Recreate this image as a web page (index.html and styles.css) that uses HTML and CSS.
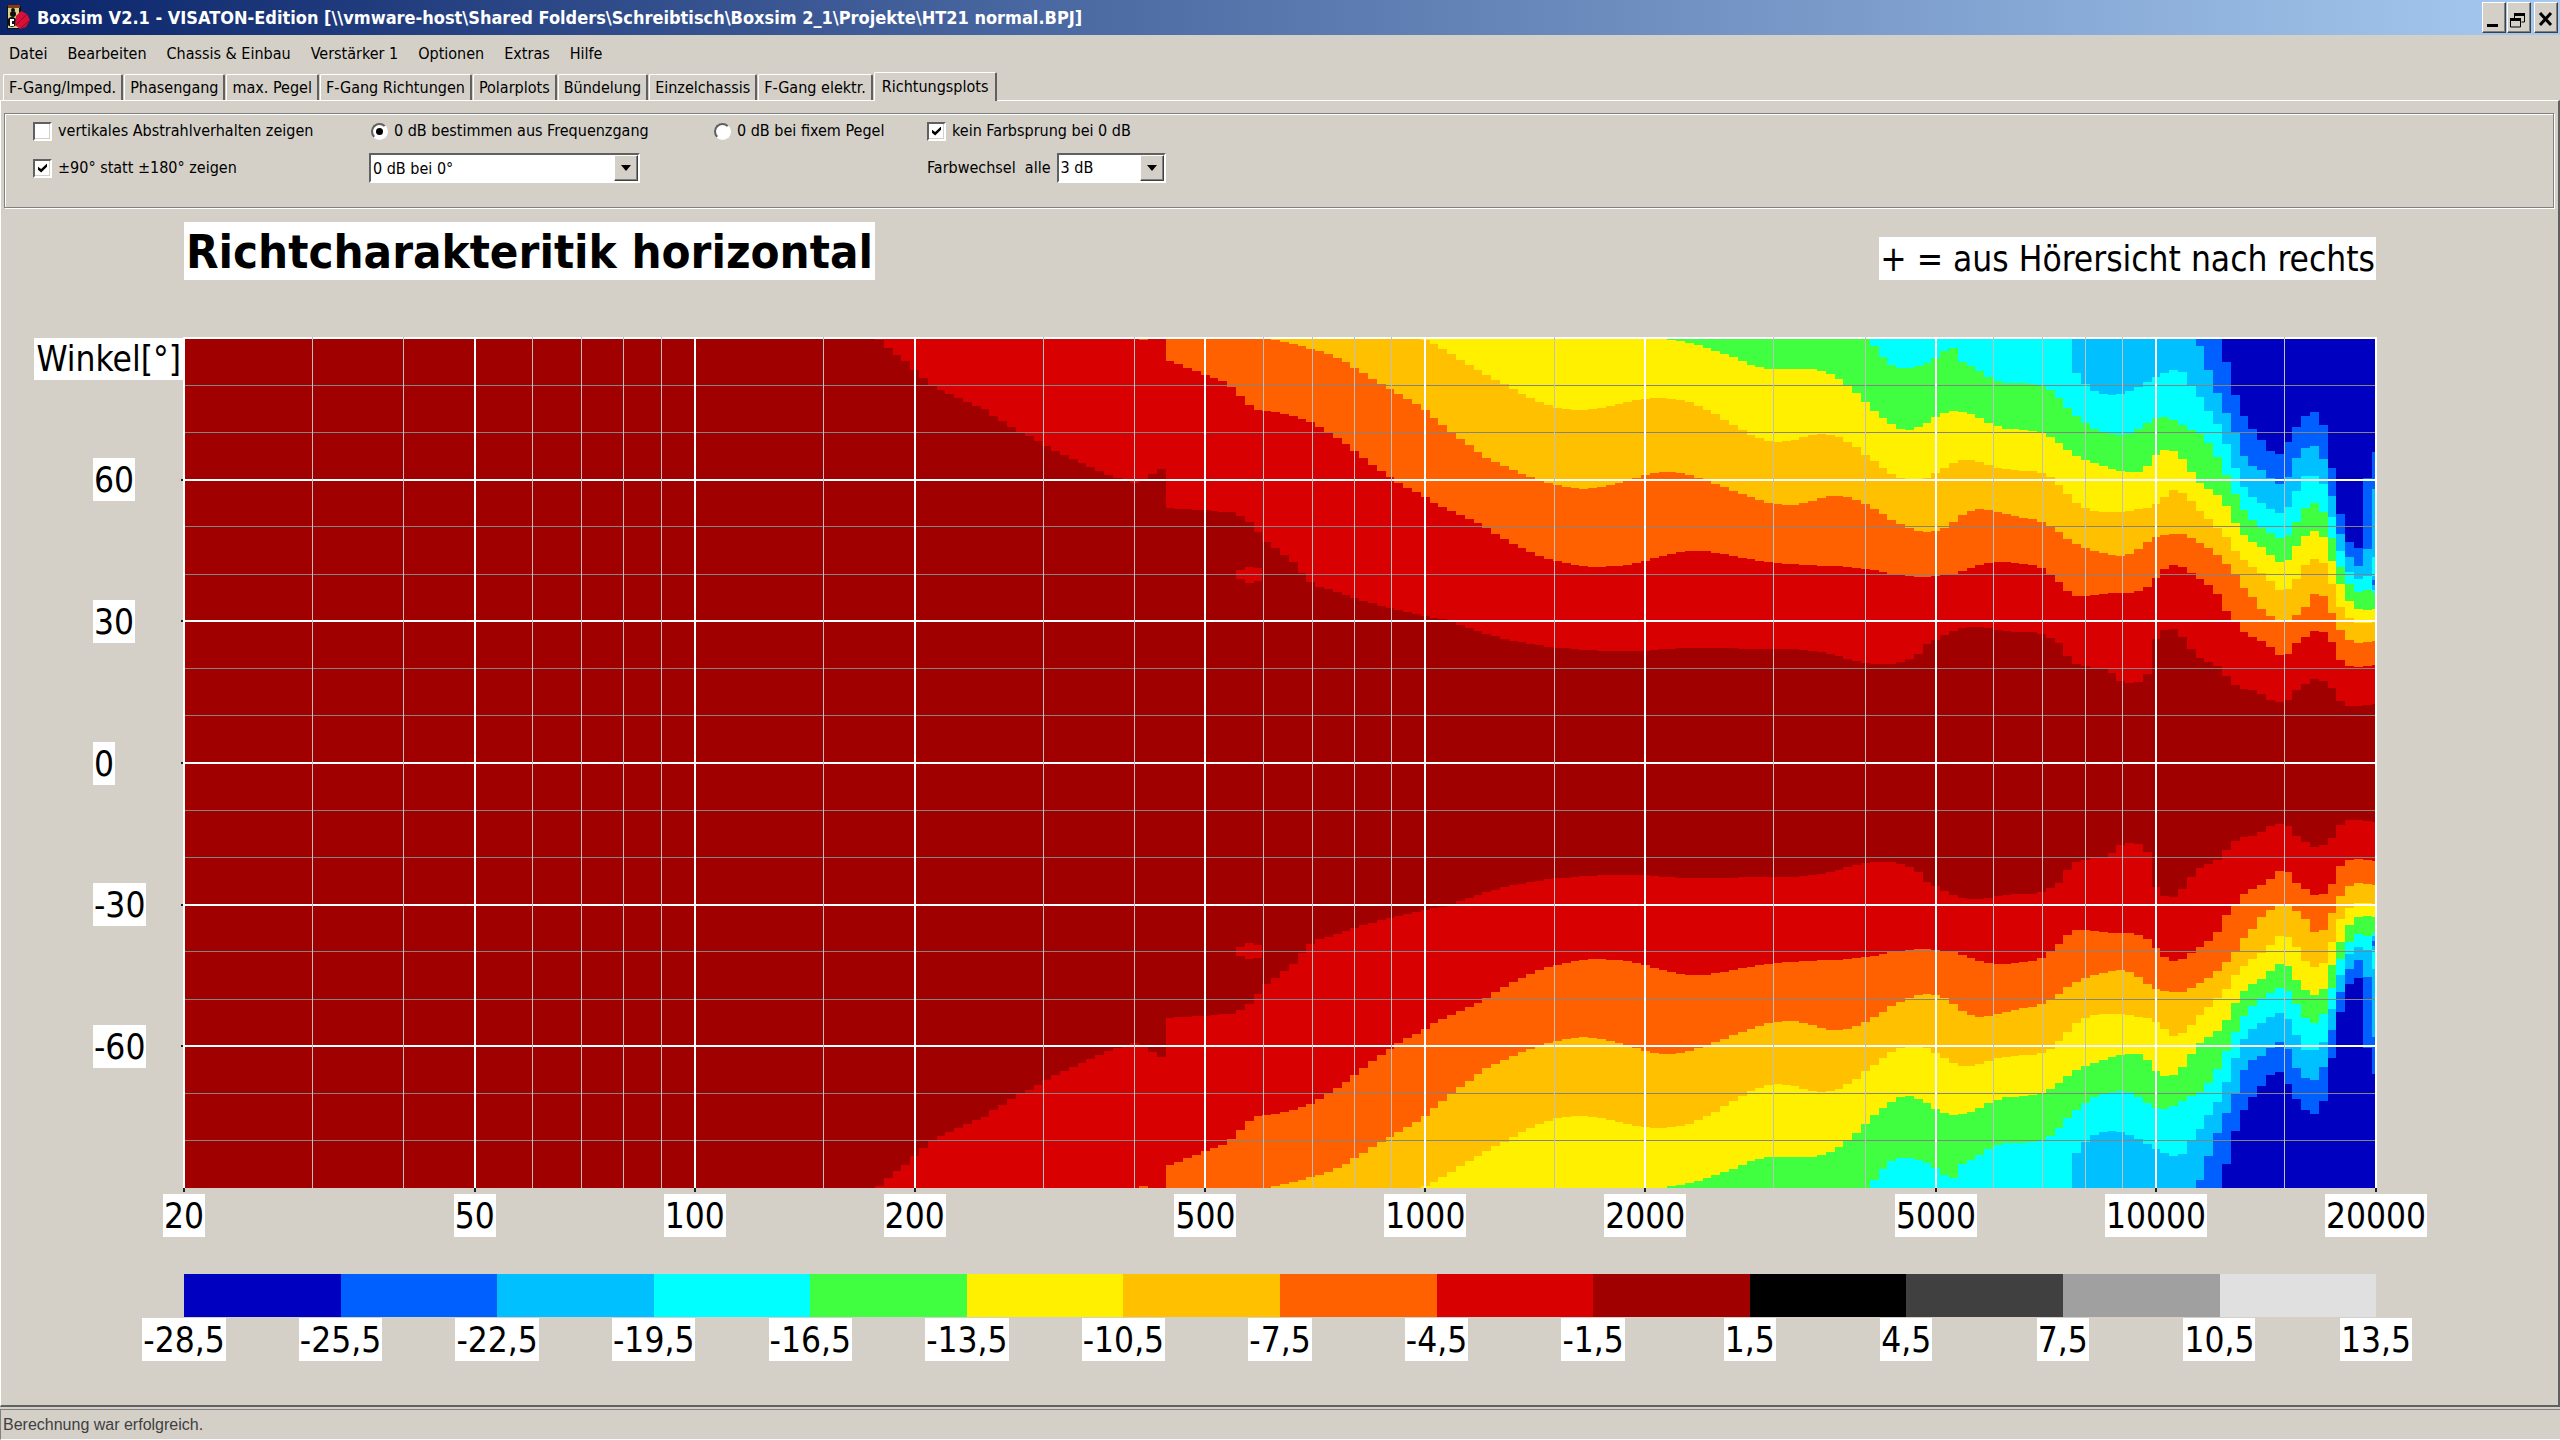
FILE: index.html
```html
<!DOCTYPE html>
<html lang="de">
<head>
<meta charset="utf-8">
<title>Boxsim V2.1 - VISATON-Edition</title>
<link rel="stylesheet" href="styles.css">
</head>
<body>
<div class="app">
  <header class="titlebar">
    <svg class="app-icon" viewBox="0 0 24 26" aria-hidden="true">
      <rect x="1" y="1" width="14" height="23" fill="#101010"/>
      <rect x="2" y="0" width="12" height="3" fill="#8a3a12"/>
      <rect x="2" y="3" width="11" height="20" fill="#d8d08c"/>
      <circle cx="7" cy="5" r="2" fill="#101010"/>
      <circle cx="7" cy="9" r="3" fill="#101010"/>
      <circle cx="6" cy="17" r="5" fill="#101010"/>
      <path d="M8 15H5v5h3" stroke="#fff" stroke-width="2" fill="none"/>
      <path d="M10 11l5-5 6 3 3 6-4 7-6 2-5-4z" fill="#d81038"/>
      <path d="M10 20L21 9M15 23l9-8" stroke="#8c0a28" stroke-width="1" fill="none"/>
    </svg>
    <h1 class="title">Boxsim V2.1 - VISATON-Edition [\\vmware-host\Shared Folders\Schreibtisch\Boxsim 2_1\Projekte\HT21 normal.BPJ]</h1>
    <div class="window-buttons">
      <button class="win-btn" type="button" aria-label="Minimieren"><svg viewBox="0 0 20 26"><path d="M4 19h11v3H4z"/></svg></button>
      <button class="win-btn" type="button" aria-label="Wiederherstellen"><svg viewBox="0 0 20 26"><path d="M6 8h11v3H6zM2 13h11v3H2z"/><path d="M6.500 9v5M16.500 9v8h-3M2.500 14v8h10v-8" fill="none" stroke="#000"/></svg></button>
      <button class="win-btn win-close" type="button" aria-label="Schließen"><svg viewBox="0 0 20 26"><path d="M5 8l11 12M16 8L5 20" stroke="#000" stroke-width="3"/></svg></button>
    </div>
  </header>

  <nav class="menubar">
    <button type="button">Datei</button>
    <button type="button">Bearbeiten</button>
    <button type="button">Chassis &amp; Einbau</button>
    <button type="button">Verstärker 1</button>
    <button type="button">Optionen</button>
    <button type="button">Extras</button>
    <button type="button">Hilfe</button>
  </nav>

  <div class="tabs" role="tablist">
    <button class="tab" role="tab" type="button">F-Gang/Imped.</button>
    <button class="tab" role="tab" type="button">Phasengang</button>
    <button class="tab" role="tab" type="button">max. Pegel</button>
    <button class="tab" role="tab" type="button">F-Gang Richtungen</button>
    <button class="tab" role="tab" type="button">Polarplots</button>
    <button class="tab" role="tab" type="button">Bündelung</button>
    <button class="tab" role="tab" type="button">Einzelchassis</button>
    <button class="tab" role="tab" type="button">F-Gang elektr.</button>
    <button class="tab tab-active" role="tab" type="button" aria-selected="true">Richtungsplots</button>
  </div>

  <main class="page">
    <form class="options">
      <label class="option"><input type="checkbox">vertikales Abstrahlverhalten zeigen</label>
      <label class="option"><input type="radio" name="ref" checked>0 dB bestimmen aus Frequenzgang</label>
      <label class="option"><input type="radio" name="ref">0 dB bei fixem Pegel</label>
      <label class="option"><input type="checkbox" checked>kein Farbsprung bei 0 dB</label>
      <label class="option"><input type="checkbox" checked>±90° statt ±180° zeigen</label>
      <span class="combo combo-wide"><select aria-label="Bezug"><option>0 dB bei 0°</option></select><span class="combo-arrow"></span></span>
      <span></span>
      <span class="option step"><label for="step">Farbwechsel&nbsp; alle</label><span class="combo combo-small"><select id="step"><option>3 dB</option></select><span class="combo-arrow"></span></span></span>
    </form>

    <section class="chart">
      <div class="chart-head">
        <h2 class="chart-title">Richtcharakteritik horizontal</h2>
        <p class="tag">+ = aus Hörersicht nach rechts</p>
      </div>
      <div class="y-axis">
        <div class="y-end y-name"><span class="tag">Winkel[°]</span></div>
        <div class="y-cell"><span class="tag">60</span></div>
        <div class="y-cell"><span class="tag">30</span></div>
        <div class="y-cell"><span class="tag">0</span></div>
        <div class="y-cell"><span class="tag">-30</span></div>
        <div class="y-cell"><span class="tag">-60</span></div>
        <div class="y-end"></div>
      </div>
      <svg class="plot" id="plot" viewBox="0 0 6576 2550" preserveAspectRatio="none" role="img" aria-label="Richtcharakteristik"></svg>
      <div class="x-axis">
        <span class="anchor"><span class="tag">20</span></span>
        <span class="anchor"><span class="tag">50</span></span>
        <span class="anchor"><span class="tag">100</span></span>
        <span class="anchor"><span class="tag">200</span></span>
        <span class="anchor"><span class="tag">500</span></span>
        <span class="anchor"><span class="tag">1000</span></span>
        <span class="anchor"><span class="tag">2000</span></span>
        <span class="anchor"><span class="tag">5000</span></span>
        <span class="anchor"><span class="tag">10000</span></span>
        <span class="anchor"><span class="tag">20000</span></span>
      </div>
      <div class="legend">
        <i class="c-navy"></i><i class="c-blue"></i><i class="c-sky"></i><i class="c-cyan"></i><i class="c-green"></i><i class="c-yellow"></i><i class="c-amber"></i><i class="c-orange"></i><i class="c-red"></i><i class="c-dark"></i><i class="c-black"></i><i class="c-gray3"></i><i class="c-gray2"></i><i class="c-gray1"></i>
      </div>
      <div class="legend-labels">
        <span class="anchor"><span class="tag">-28,5</span></span>
        <span class="anchor"><span class="tag">-25,5</span></span>
        <span class="anchor"><span class="tag">-22,5</span></span>
        <span class="anchor"><span class="tag">-19,5</span></span>
        <span class="anchor"><span class="tag">-16,5</span></span>
        <span class="anchor"><span class="tag">-13,5</span></span>
        <span class="anchor"><span class="tag">-10,5</span></span>
        <span class="anchor"><span class="tag">-7,5</span></span>
        <span class="anchor"><span class="tag">-4,5</span></span>
        <span class="anchor"><span class="tag">-1,5</span></span>
        <span class="anchor"><span class="tag">1,5</span></span>
        <span class="anchor"><span class="tag">4,5</span></span>
        <span class="anchor"><span class="tag">7,5</span></span>
        <span class="anchor"><span class="tag">10,5</span></span>
        <span class="anchor"><span class="tag">13,5</span></span>
      </div>
    </section>
  </main>

  <footer class="status">Berechnung war erfolgreich.</footer>
</div>
<script src="plot.js"></script>
</body>
</html>
```
FILE: styles.css
```css
* { box-sizing: border-box; }

body {
  margin: 0;
  background: #d4d0c8;
  color: #000;
  font-family: "DejaVu Sans Condensed", "DejaVu Sans", sans-serif;
  font-size: 16px;
}

button, select, input { font: inherit; color: inherit; margin: 0; }

.app { display: flex; flex-direction: column; min-height: 100vh; }

/* Title bar */
.titlebar {
  display: flex;
  align-items: center;
  height: 35px;
  padding: 0 2px 0 6px;
  background: linear-gradient(90deg, #0a246a, #a6caf0);
}
.app-icon { width: 24px; height: 26px; }
.title { flex: 1; margin: 0 0 0 7px; color: #fff; font-size: 18px; line-height: 24px; white-space: nowrap; }
.window-buttons { display: flex; gap: 1px; }
.win-btn {
  width: 24px;
  height: 31px;
  padding: 0;
  background: #d4d0c8;
  border: 1px solid;
  border-color: #fff #404040 #404040 #fff;
  box-shadow: inset -1px -1px #808080;
}
.win-btn svg { display: block; width: 20px; height: 26px; }
.win-close { margin-left: 2px; }

/* Menu */
.menubar { display: flex; height: 37px; align-items: center; gap: 20px; padding-left: 9px; }
.menubar button { padding: 0; border: 0; background: none; line-height: 20px; }

/* Tabs */
.tabs { display: flex; align-items: flex-end; gap: 1px; height: 28px; padding-left: 3px; }
.tab {
  height: 26px;
  padding: 0 5px;
  line-height: 24px;
  border: solid;
  border-width: 1px 2px 0 1px;
  border-color: #fff #606060 #fff #fff;
  border-radius: 2px 2px 0 0;
  background: #d4d0c8;
  white-space: nowrap;
}
.tab-active { height: 29px; margin-bottom: -1px; padding: 0 7px; z-index: 1; }

/* Page */
.page {
  flex: 1;
  display: flex;
  flex-direction: column;
  padding: 12px 4px 0 3px;
  border: solid;
  border-width: 1px 2px 2px 1px;
  border-color: #fff #606060 #606060 #fff;
}
.options {
  display: grid;
  grid-template-columns: 336px 343px 215px 1fr;
  grid-template-rows: 34px 40px;
  align-items: center;
  height: 95px;
  padding-left: 28px;
  border: 1px solid #808080;
  box-shadow: inset 1px 1px #fff, 1px 1px #fff;
}
.option { display: flex; align-items: center; gap: 6px; line-height: 20px; white-space: nowrap; }
.step { gap: 6px; }

input[type="checkbox"] {
  appearance: none;
  display: grid;
  place-items: center;
  width: 19px;
  height: 19px;
  background: #fff;
  border: 2px solid;
  border-color: #606060 #fff #fff #606060;
  box-shadow: inset -1px -1px #d4d0c8;
}
input[type="checkbox"]:checked::before {
  content: "";
  width: 9px;
  height: 9px;
  background: #000;
  clip-path: polygon(0 35%, 35% 62%, 100% 0, 100% 35%, 35% 100%, 0 70%);
}
input[type="radio"] {
  appearance: none;
  display: grid;
  place-items: center;
  width: 17px;
  height: 17px;
  margin-left: 2px;
  background: #fff;
  border: 2px solid;
  border-color: #606060 #fff #fff #606060;
  border-radius: 50%;
}
input[type="radio"]:checked::before {
  content: "";
  width: 7px;
  height: 7px;
  border-radius: 50%;
  background: #000;
}

.combo { position: relative; display: block; height: 30px; }
.combo-wide { width: 271px; }
.combo-small { width: 109px; }
.combo select {
  appearance: none;
  display: block;
  width: 100%;
  height: 100%;
  padding: 0 26px 0 2px;
  background: #fff;
  border: 2px solid;
  border-color: #606060 #fff #fff #606060;
  border-radius: 0;
}
.combo-arrow {
  position: absolute;
  top: 2px;
  right: 2px;
  bottom: 2px;
  width: 24px;
  display: grid;
  place-items: center;
  background: #d4d0c8;
  border: 1px solid;
  border-color: #fff #404040 #404040 #fff;
  box-shadow: inset -1px -1px #808080;
  pointer-events: none;
}
.combo-arrow::before {
  content: "";
  border: solid transparent;
  border-width: 6px 5px 0;
  border-top-color: #000;
}

/* Chart */
.chart {
  flex: 1;
  display: grid;
  grid-template-columns: 180px minmax(0, 1fr) 178px;
  grid-template-rows: auto minmax(400px, 1fr) auto auto auto;
  padding: 14px 0 44px;
}
.chart-head {
  grid-column: 2;
  display: flex;
  justify-content: space-between;
  align-items: flex-end;
  margin-bottom: 58px;
}
.chart-title { margin: 0; padding: 2px 2px 0; background: #fff; font-size: 47px; line-height: 56px; white-space: nowrap; }
.tag { display: block; margin: 0; padding: 2px 1px 0; background: #fff; font-size: 35px; line-height: 41px; white-space: nowrap; }

.y-axis { grid-column: 1; grid-row: 2; display: flex; flex-direction: column; min-height: 0; }
.y-end { flex: 1 1 0; min-height: 0; }
.y-name { display: flex; justify-content: flex-end; align-items: flex-start; padding-right: 1px; }
.y-name .tag { padding: 0 2px; line-height: 42px; }
.y-cell { flex: 2 1 0; min-height: 0; display: flex; align-items: center; padding-left: 89px; }

.plot { grid-column: 2; grid-row: 2; display: block; width: 100%; height: 100%; overflow: visible; shape-rendering: crispEdges; }
.plot .line { vector-effect: non-scaling-stroke; fill: none; }
.minor-h { stroke: #848484; stroke-width: 1px; }
.minor-v { stroke: #c0c0c0; stroke-width: 1px; }
.major { stroke: #fff; stroke-width: 2px; }
.tick { stroke: #202020; stroke-width: 2px; }

.x-axis {
  grid-column: 2;
  display: grid;
  grid-template-columns: repeat(3, minmax(0, 39794fr) minmax(0, 30103fr) minmax(0, 30103fr)) 0;
  padding-top: 6px;
}
.anchor { width: 0; display: flex; justify-content: center; }

.legend { grid-column: 2; display: flex; height: 43px; margin-top: 37px; }
.legend i { flex: 1; }
.legend-labels { grid-column: 2; display: grid; grid-template-columns: repeat(14, minmax(0, 1fr)) 0; padding-top: 1px; }

.c-navy { background: #0000c0; fill: #0000c0; }
.c-blue { background: #0060ff; fill: #0060ff; }
.c-sky { background: #00c0ff; fill: #00c0ff; }
.c-cyan { background: #00ffff; fill: #00ffff; }
.c-green { background: #40ff40; fill: #40ff40; }
.c-yellow { background: #fff000; fill: #fff000; }
.c-amber { background: #ffc000; fill: #ffc000; }
.c-orange { background: #ff6000; fill: #ff6000; }
.c-red { background: #d80000; fill: #d80000; }
.c-dark { background: #a00000; fill: #a00000; }
.c-black { background: #000; }
.c-gray3 { background: #404040; }
.c-gray2 { background: #a0a0a0; }
.c-gray1 { background: #e0e0e0; }

/* Status bar */
.status {
  height: 31px;
  margin-top: 2px;
  padding-left: 2px;
  border-top: 1px solid #808080;
  border-left: 1px solid #808080;
  border-bottom: 1px solid #fff;
  color: #404040;
  font-family: "Liberation Sans", Arial, sans-serif;
  font-size: 16px;
  line-height: 30px;
}
```
FILE: plot.js
```js
// Contour edges: first column index, then the depth from the top edge for each column.
const W = 6576, H = 2550, COLS = 249, TOP = 24;
const bands = [
  ["c-red", 79, [29,54,75,93,120,144,165,180,192,204,216,228,237,258,273,291,308,318,333,348,363,375,387,399,411,423,435,445,451,459,450,432,417,
    534,537,537,540,540,543,546,546,558,576,606,636,654,675,696,730,
    756,771,777,786,795,804,813,819,828,835,840,846,852,858,864,867,874,885,894,903,911,918,927,933,936,942,946,951,954,954,957,960,960,
    963,963,963,963,963,963,960,957,957,954,954,954,954,954,954,954,957,957,957,957,957,957,957,
    960,963,966,972,978,987,993,999,1002,1002,1002,996,987,972,942,930,915,903,894,891,891,894,900,903,906,906,906,912,924,939,
    978,1002,1008,1013,1015,1030,1053,1058,1055,1032,927,900,897,921,957,984,996,1008,1038,1065,1077,1080,1092,1110,1116,1110,1080,1062,1047,1053,1074,1113,1128,1128,1126,1123]],
  ["c-orange", 109, [29]],
  ["c-orange", 112, [93,102,114,123,135,144,153,171,198,225,240,243,246,252,258,267,276,291,307,324,342,363,384,405,423,441,459,474,486,501,
    519,531,543,555,567,579,594,612,627,642,654,666,678,687,693,699,705,708,711,711,708,708,705,699,693,684,678,672,666,663,663,663,669,
    672,678,684,687,693,696,699,702,702,705,706,708,708,708,711,714,717,720,726,731,735,738,741,741,738,735,732,723,714,705,699,696,696,699,702,705,714,732,756,
    783,798,798,796,793,790,789,789,783,771,744,717,705,711,729,747,765,792,843,871,906,921,933,951,975,972,939,921,903,906,936,990,1008,1011,1008,1005]],
  ["c-amber", 124, [29,36,42,48,57,63,72,84,96,114,129,147,163,177,192,207,222,240,264,285,307,327,345,366,384,396,408,420,432,441,450,459,465,471,474,477,
    474,471,465,459,452,444,435,429,426,426,429,435,444,450,461,471,483,492,501,510,519,522,525,525,519,513,504,498,498,501,510,522,537,552,570,582,594,603,606,603,
    594,576,555,543,537,540,546,552,558,564,567,576,590,606,627,642,654,663,669,675,678,672,657,636,621,615,612,612,624,639,654,675,702,735,774,801,837,858,874,870,
    855,831,792,798,849,900,930,939,936,933]],
  ["c-yellow", 141, [29,42,57,72,90,105,120,135,150,163,177,192,204,216,225,234,237,240,240,237,234,228,222,216,210,207,204,204,207,210,216,228,240,252,
    270,285,300,315,324,333,336,333,330,321,315,312,315,321,336,351,375,393,414,432,443,447,447,444,429,414,399,390,390,396,405,414,417,420,423,423,429,441,465,
    492,519,534,543,546,546,546,543,538,534,522,501,480,489,513,543,567,593,621,663,690,711,729,753,780,777,747,705,687,699,762,831,864,880,880,874]],
  ["c-green", 169, [29,33,38,45,54,63,72,81,93,105,111,117,117,117,117,117,117,123,132,147,167,189,216,243,264,282,297,300,291,279,261,249,243,246,252,264,279,288,297,297,300,304,308,321,339,
    360,378,390,399,408,417,423,426,426,408,375,360,363,387,426,459,477,495,528,580,615,636,651,675,696,690,648,618,603,621,693,762,813,837,840,837]],
  ["c-cyan", 192, [48,81,105,114,114,108,99,84,63,54,96,108,123,141,153,159,159,160,163,167,180,204,234,258,279,297,306,312,315,312,297,279,264,262,270,285,300,312,339,381,435,492,540,570,594,609,624,615,576,534,519,546,624,711,762,786,780,789]],
  ["c-sky", 215, [129,163,183,192,195,192,183,171,156,141,129,120,126,164,201,243,282,342,414,471,501,519,537,549,531,483,438,438,462,561,663,726,747,738,681]],
  ["c-blue", 229, [48,120,189,249,307,378,408,420,444,462,441,384,354,348,387,498,612,681,708,657,477]],
  ["c-navy", 232, [96,195,258,297,330,363,372,336,291,258,246,285,414,552,636,654,444,366]]
];
// Isolated patches: class, column, upper and lower depth.
const patches = [
  ["c-red", 120, 720, 747], ["c-red", 121, 711, 759], ["c-red", 122, 714, 753],
  ["c-sky", 249, 738, 780], ["c-blue", 249, 750, 765]
];
const NS = "http://www.w3.org/2000/svg";
const plot = document.getElementById("plot");
const colX = i => Math.min(W, Math.max(0, Math.round((i - 0.5) * W / COLS)));
function path(cls, d) {
  const p = document.createElementNS(NS, "path");
  p.setAttribute("class", cls);
  p.setAttribute("d", d);
  plot.appendChild(p);
}
path("c-dark", `M0 0H${W}V${H}H0Z`);
for (const [cls, first, depths] of bands) {
  let up = `M${colX(first)} 0`, down = `M${colX(first)} ${H}`;
  depths.forEach((c, n) => {
    const x = colX(first + n + 1);
    up += `V${c - TOP}H${x}`;
    down += `V${H - c + TOP}H${x}`;
  });
  path(cls, `${up}V0Z${down}V${H}Z`);
}
for (const [cls, col, a, b] of patches) {
  const x0 = colX(col), x1 = colX(col + 1);
  path(cls, `M${x0} ${a - TOP}H${x1}V${b - TOP}H${x0}Z M${x0} ${H - a + TOP}H${x1}V${H - b + TOP}H${x0}Z`);
}
const freqX = f => W * Math.log10(f / 20) / 3;
let minorH = "", majorH = `M0 0H${W}`, minorV = "", majorV = "", ticks = "";
for (let a = 10; a < 180; a += 10) {
  const y = H * a / 180;
  if (a % 30) minorH += `M0 ${y}H${W}`;
  else { majorH += `M0 ${y}H${W}`; ticks += `M-9 ${y}H-3`; }
}
const majors = [20, 50, 100, 200, 500, 1000, 2000, 5000, 10000, 20000];
for (const f of majors) {
  majorV += `M${freqX(f)} -3V${H}`;
  ticks += `M${freqX(f)} ${H}v12`;
}
for (const f of [30,40,60,70,80,90,150,300,400,600,700,800,900,1500,3000,4000,6000,7000,8000,9000,15000]) {
  minorV += `M${freqX(f)} -3V${H}`;
}
path("line minor-h", minorH);
path("line major", majorH);
path("line minor-v", minorV);
path("line major", majorV);
path("line tick", ticks);
```
